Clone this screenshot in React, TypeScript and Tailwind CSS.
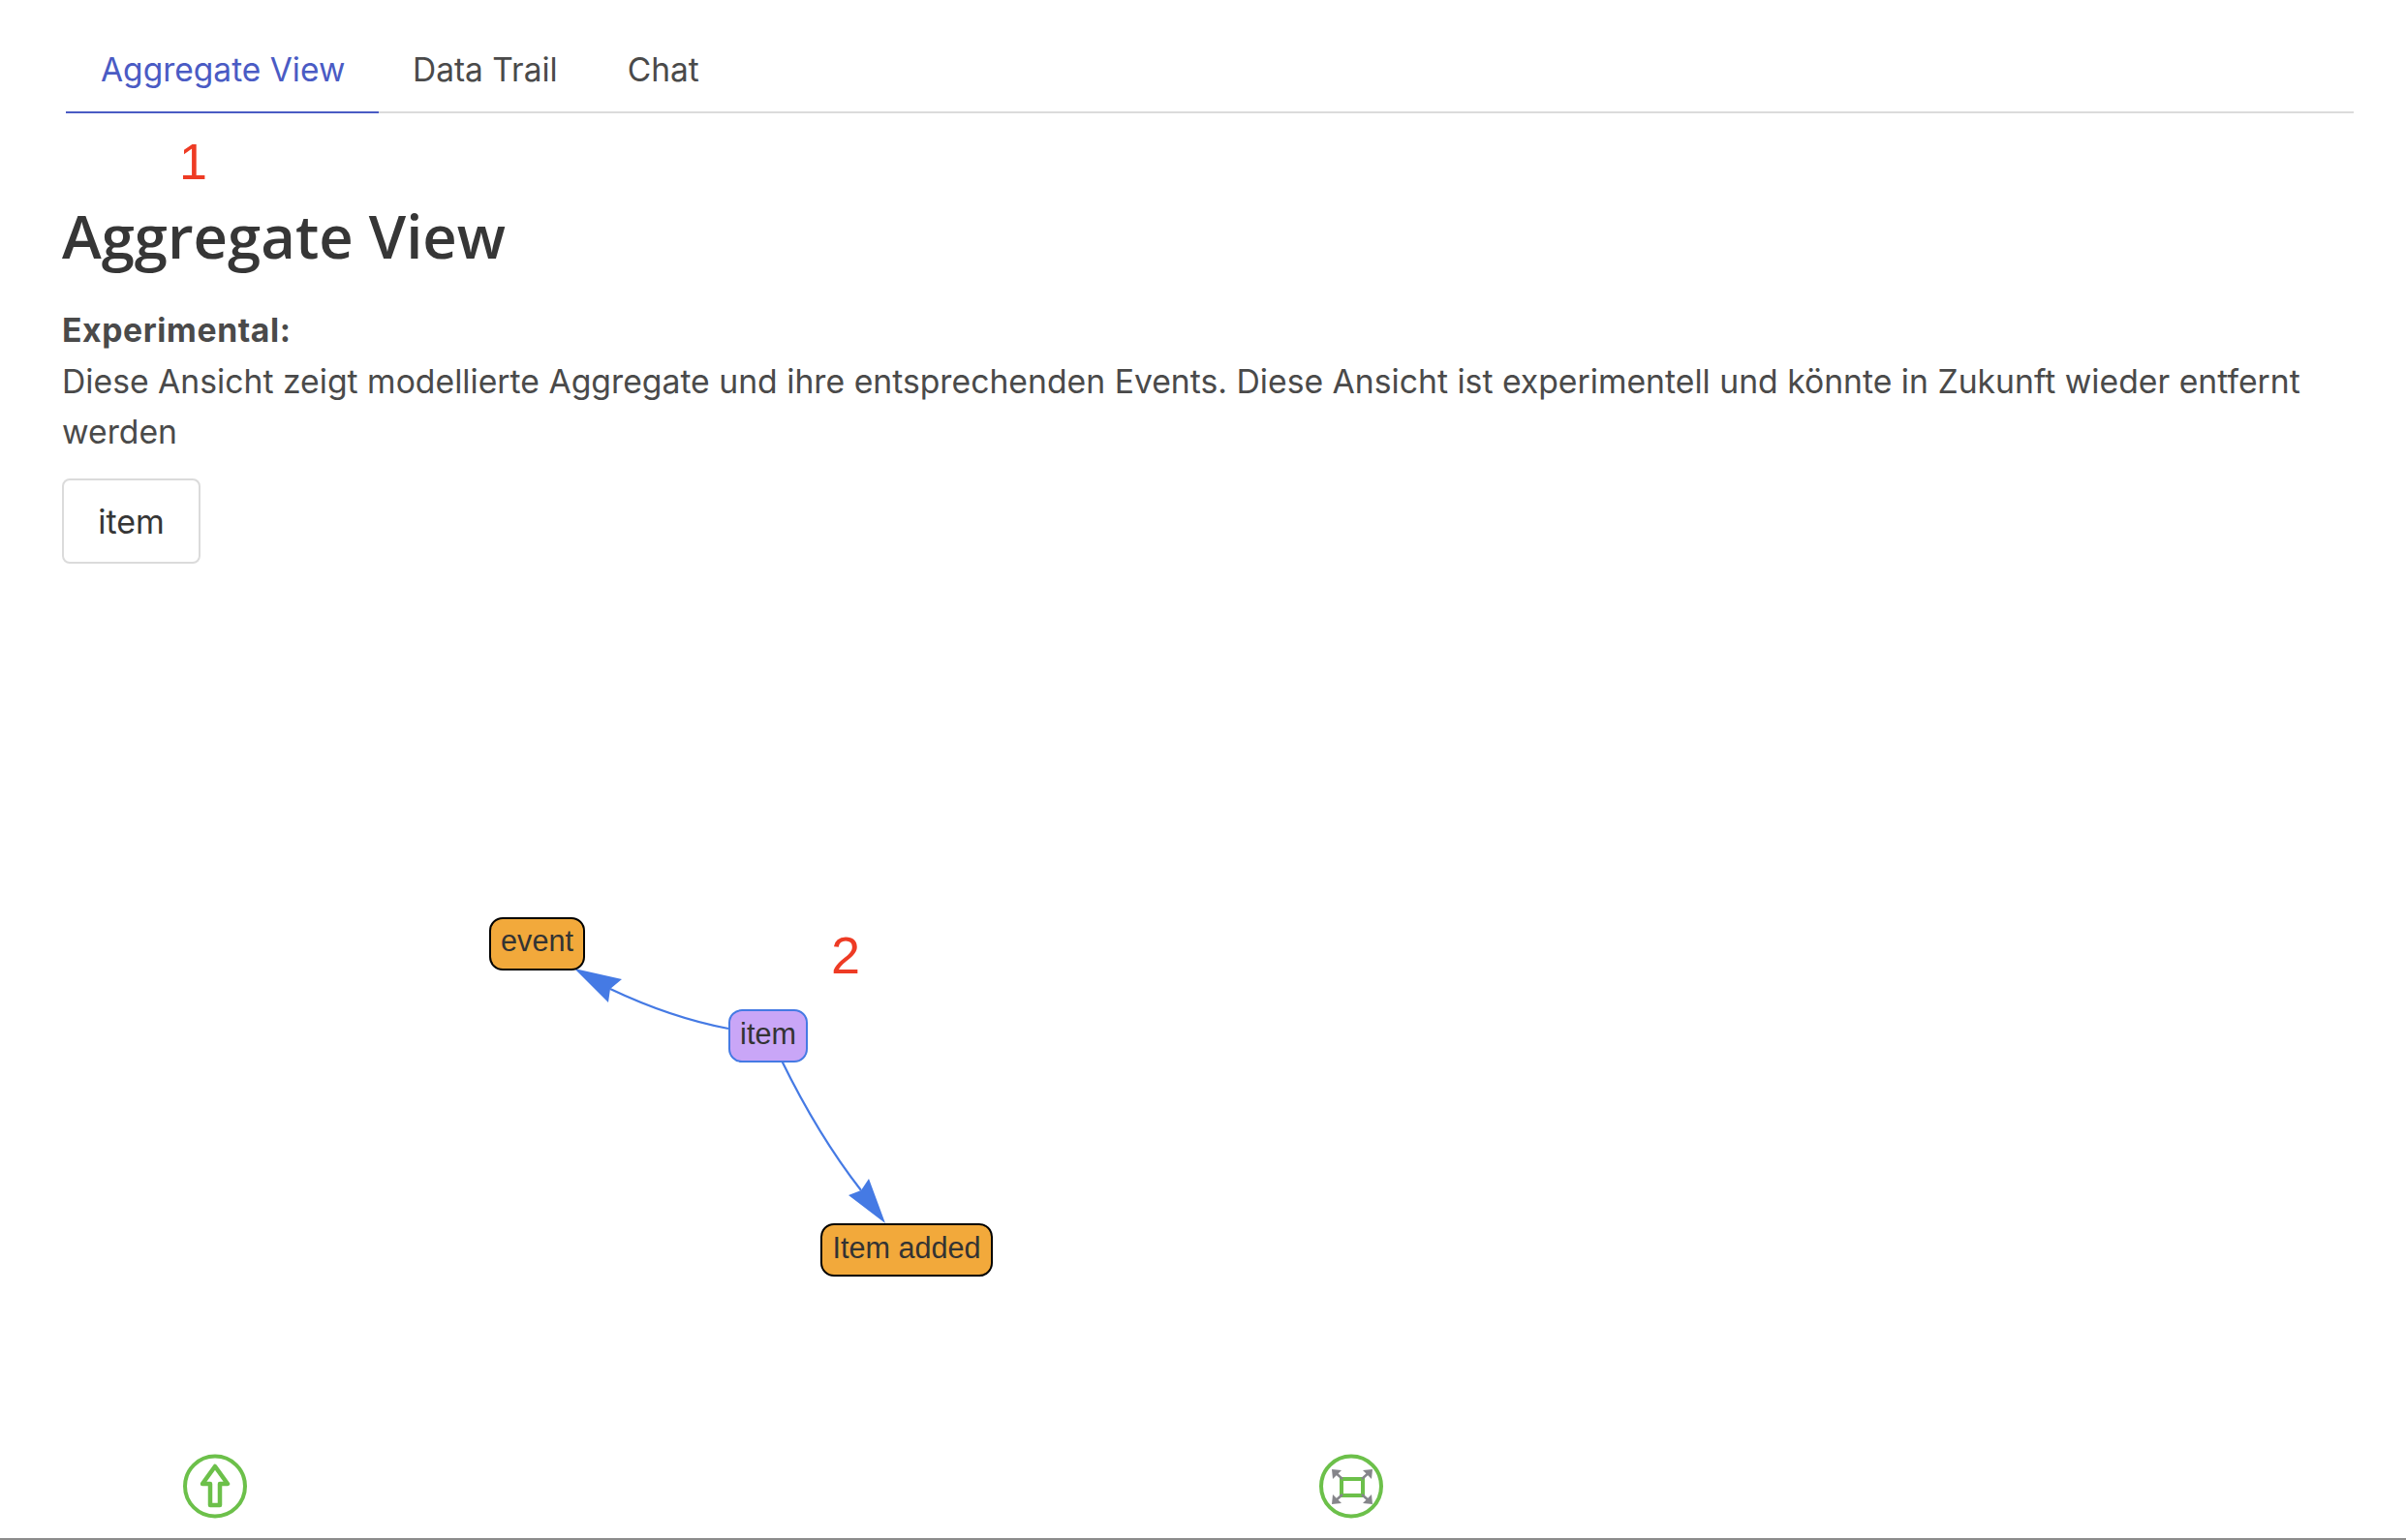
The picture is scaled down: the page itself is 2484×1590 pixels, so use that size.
export default function App() {
  return (
    <div className="relative h-[1590px] w-full overflow-hidden bg-white font-['Inter',sans-serif] text-[#4a4a4a]">
      <div className="flex h-[1589px] flex-col">
        <div className="ml-[68px] mr-[54px] mt-[42px] flex h-[75px] border-b-2 border-[#dbdbdb] text-[33.5px] leading-[60px]">
          <div className="-mb-[2px] w-[323px] border-b-2 border-[#4a5bc4] pl-[36px] text-[#4a5bc4]">Aggregate View</div>
          <div className="ml-[35px] text-[#4a4a4a]">Data Trail</div>
          <div className="ml-[72px] text-[#4a4a4a]">Chat</div>
        </div>
        <div className="px-[64px]">
          <h1 className="mt-[82px] font-['Open_Sans',sans-serif] text-[61.6px] font-semibold leading-[88px] text-[#363636]">Aggregate View</h1>
          <div className="mt-[28px] text-[33.72px] leading-[52.5px]">
            <p className="font-bold tracking-[0.6px]">Experimental:</p>
            <p>Diese Ansicht zeigt modellierte Aggregate und ihre entsprechenden Events. Diese Ansicht ist experimentell und könnte in Zukunft wieder entfernt werden</p>
          </div>
          <button className="mt-[21px] flex h-[88px] w-[143px] items-center justify-center rounded-[8px] border-2 border-[#dbdbdb] bg-white pt-[2px] text-[34px] text-[#363636]">item</button>
        </div>
      </div>

      <span className="absolute left-[185px] top-[137px] font-['Liberation_Sans',sans-serif] text-[52px] leading-[60px] text-[#ee3b24]">1</span>
      <span className="absolute left-[858px] top-[956px] font-['Liberation_Sans',sans-serif] text-[54px] leading-[60px] text-[#ee3b24]">2</span>

      <svg className="absolute left-0 top-0" width="2484" height="1590" viewBox="0 0 2484 1590" fill="none">
        <path d="M752 1062 C710 1054 670 1040 630 1021" stroke="#457ae4" strokeWidth="2.2" />
        <path d="M593 1000 L642 1011 L630 1021 L628 1035 Z" fill="#457ae4" />
        <path d="M807 1095 C830 1142 857 1188 889 1229" stroke="#457ae4" strokeWidth="2.2" />
        <path d="M914 1263 L897 1217 L889 1229 L876 1234 Z" fill="#457ae4" />

        <circle cx="222" cy="1534.5" r="31" stroke="#6cc04a" strokeWidth="4" />
        <path d="M222 1514 L235 1532 L227 1532 L227 1554 L217 1554 L217 1532 L209 1532 Z" stroke="#6cc04a" strokeWidth="4.5" strokeLinejoin="round" />

        <circle cx="1395" cy="1534.5" r="31" stroke="#6cc04a" strokeWidth="4" />
        <rect x="1385" y="1527" width="22" height="17" stroke="#6cc04a" strokeWidth="4" />
        <g stroke="#85858a" strokeWidth="2.5">
          <path d="M1377 1519 L1386 1527" />
          <path d="M1415 1519 L1406 1527" />
          <path d="M1377 1551 L1386 1543" />
          <path d="M1415 1551 L1406 1543" />
        </g>
        <g fill="#85858a">
          <path d="M1375 1517 L1385 1518 L1376 1527 Z" />
          <path d="M1417 1517 L1407 1518 L1416 1527 Z" />
          <path d="M1375 1553 L1385 1552 L1376 1543 Z" />
          <path d="M1417 1553 L1407 1552 L1416 1543 Z" />
        </g>
      </svg>

      <div className="absolute left-[505px] top-[947px] flex h-[55px] w-[99px] items-center justify-center rounded-[14px] border-[2.5px] border-black bg-[#f2a93b] pb-[5px] font-['Liberation_Sans',sans-serif] text-[30.6px] text-[#333]">event</div>
      <div className="absolute left-[752px] top-[1042px] flex h-[55px] w-[82px] items-center justify-center rounded-[14px] border-[2.5px] border-[#457ae4] bg-[#c9a6f7] pb-[3px] font-['Liberation_Sans',sans-serif] text-[30.6px] text-[#333]">item</div>
      <div className="absolute left-[847px] top-[1263px] flex h-[55px] w-[178px] items-center justify-center rounded-[14px] border-[2.5px] border-black bg-[#f2a93b] pb-[3px] font-['Liberation_Sans',sans-serif] text-[30.6px] text-[#333]">Item added</div>

      <div className="absolute bottom-0 left-0 h-[2px] w-full bg-[#8c8c8c]" />
    </div>
  );
}
